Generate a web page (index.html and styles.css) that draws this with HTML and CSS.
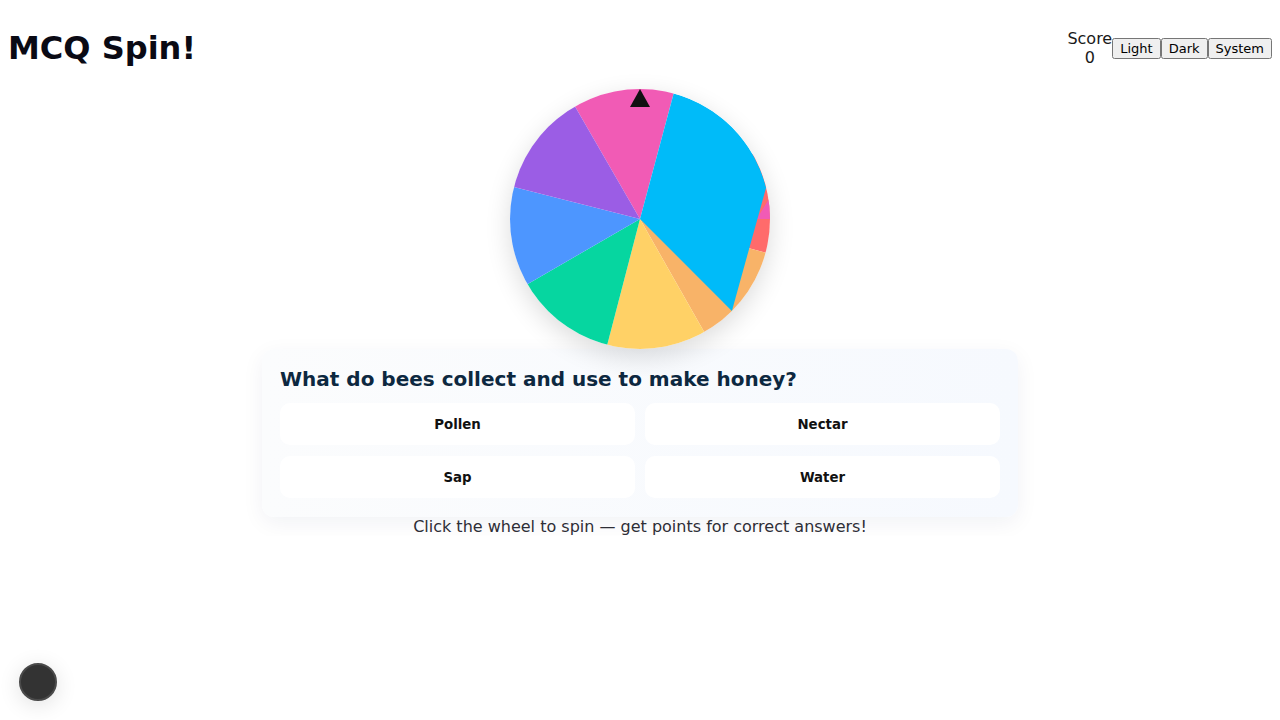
FILE: index.html
```html
<!DOCTYPE html>
<html lang="en">
<head>
<meta charset="utf-8">
<title>MCQ Spin!</title>
<link rel="stylesheet" href="styles.css">
</head>
<body>
<header class="topbar">
  <h1 class="title">MCQ Spin!</h1>
  <div class="controls">
    <div class="score">
      <div class="score-label">Score</div>
      <div class="score-value">0</div>
    </div>
    <button class="theme-btn">Light</button>
    <button class="theme-btn">Dark</button>
    <button class="theme-btn">System</button>
  </div>
</header>
<main class="game">
  <div class="wheel-wrap">
    <div class="wheel">
      <svg class="wheel-svg" width="260" height="260" viewBox="0 0 260 260">
        <defs>
          <clipPath id="wheelClip"><circle cx="130" cy="130" r="130"/></clipPath>
        </defs>
        <g clip-path="url(#wheelClip)">
          <polygon fill="#ff6b6b" points="130,130 303.2,30 323.2,181.8"/>
          <polygon fill="#f8b368" points="130,130 323.2,181.8 228.8,303.9"/>
          <polygon fill="#f15bb5" points="245,132.5 259.5,109 300,109 300,130 245,130"/>
          <polygon fill="#f15bb5" points="130,130 30,-43.2 181.8,-63.2"/>
          <polygon fill="#ffd166" points="130,130 228.8,303.9 79.6,323.5"/>
          <polygon fill="#06d6a0" points="130,130 79.6,323.5 -43.1,230.2"/>
          <polygon fill="#4d96ff" points="130,130 -43.1,230.2 -63.9,80.9"/>
          <polygon fill="#9b5de5" points="130,130 -63.9,80.9 30,-43.2"/>
          <path fill="#00bbf9" d="M130,130 L163.65,4.43 A130,130 0 0 1 256.1,98.6 L221.9,221.9 Z"/>
        </g>
      </svg>
    </div>
    <div class="pointer"></div>
  </div>
  <section class="card">
    <h2 class="question">What do bees collect and use to make honey?</h2>
    <div class="answers">
      <button class="answer">Pollen</button>
      <button class="answer">Nectar</button>
      <button class="answer">Sap</button>
      <button class="answer">Water</button>
    </div>
  </section>
  <p class="hint">Click the wheel to spin — get points for correct answers!</p>
</main>
<button class="fab" aria-label="menu"></button>
</body>
</html>
```
FILE: styles.css
```css
body {
  margin: 8px;
  font-family: "DejaVu Sans", "Liberation Sans", sans-serif;
  color: #111;
  background: #fff;
}

.topbar {
  display: flex;
  justify-content: space-between;
  align-items: center;
}

.title {
  margin: 21.44px 0;
  font-size: 32px;
  font-weight: bold;
  color: #0a0a14;
}

.controls {
  display: flex;
  align-items: center;
}

.score {
  text-align: center;
  font-size: 16px;
  color: #1a1a1a;
}

.theme-btn {
  font-family: "DejaVu Sans", sans-serif;
  font-size: 13px;
  margin: 0;
}

.game {
  display: flex;
  flex-direction: column;
  align-items: center;
}

.wheel-wrap {
  position: relative;
  width: 260px;
  height: 260px;
}

.wheel {
  width: 260px;
  height: 260px;
  border-radius: 50%;
  box-shadow: 0 8px 26px rgba(0, 0, 0, 0.14);
}

.wheel-svg {
  display: block;
}

.pointer {
  position: absolute;
  top: 0;
  left: 50%;
  transform: translateX(-50%);
  width: 0;
  height: 0;
  border-left: 10.5px solid transparent;
  border-right: 10.5px solid transparent;
  border-bottom: 18px solid #111;
}

.card {
  box-sizing: border-box;
  width: 756px;
  padding: 18px 18px 19px;
  border-radius: 12px;
  background: linear-gradient(90deg, #fbfcfd 0%, #f6f9fe 100%);
  box-shadow: 0 6px 22px rgba(20, 40, 80, 0.06);
}

.question {
  margin: 0 0 12px;
  font-size: 20px;
  font-weight: bold;
  color: #0d2840;
}

.answers {
  display: grid;
  grid-template-columns: 1fr 1fr;
  gap: 11px 10px;
}

.answer {
  box-sizing: border-box;
  font-family: "DejaVu Sans", sans-serif;
  font-size: 13.333px;
  font-weight: bold;
  color: #111;
  background: #fff;
  border: none;
  border-radius: 10px;
  height: 42px;
  padding: 2px 0 0;
  margin: 0;
}

.hint {
  margin: 0;
  font-size: 16px;
  color: #2e2e36;
}

.fab {
  position: fixed;
  left: 19px;
  bottom: 19px;
  width: 38px;
  height: 38px;
  padding: 0;
  border-radius: 50%;
  border: 2px solid #4a4a4a;
  background: #333;
  box-shadow: 0 4px 22px rgba(0, 0, 0, 0.12);
}
```
